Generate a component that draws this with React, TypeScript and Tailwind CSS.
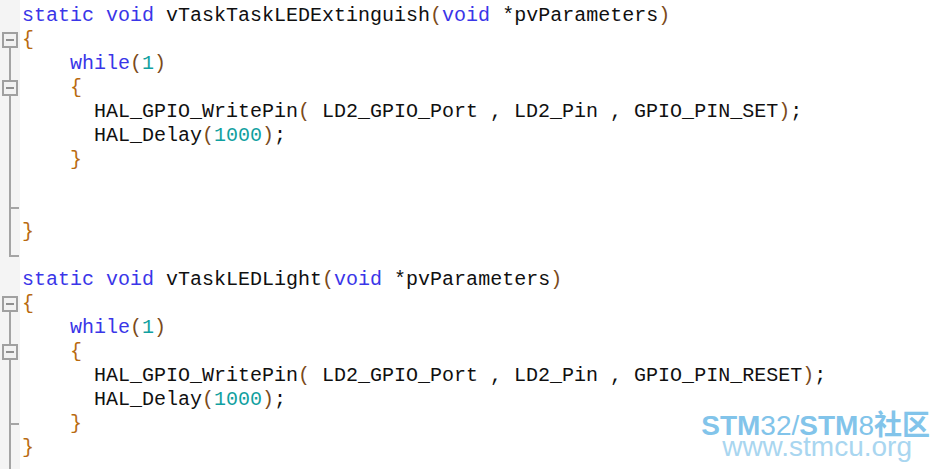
import React from "react";

type Tok = [string, string];
const KW = "text-[#3a36e8]";
const NUM = "text-[#10a0a0]";
const BR = "text-[#b86a10]";
const PA = "text-[#7a4a1a]";
const TX = "text-[#101010]";

type Gut = "none" | "boxTop" | "boxMid" | "line" | "tick" | "end";

const lines: { g: Gut; t: Tok[] }[] = [
  { g: "none", t: [["static", KW], [" ", TX], ["void", KW], [" vTaskTaskLEDExtinguish", TX], ["(", PA], ["void", KW], [" *pvParameters", TX], [")", PA]] },
  { g: "boxTop", t: [["{", BR]] },
  { g: "line", t: [["    ", TX], ["while", KW], ["(", PA], ["1", NUM], [")", PA]] },
  { g: "boxMid", t: [["    ", TX], ["{", BR]] },
  { g: "line", t: [["      HAL_GPIO_WritePin", TX], ["(", PA], [" LD2_GPIO_Port , LD2_Pin , GPIO_PIN_SET", TX], [")", PA], [";", TX]] },
  { g: "line", t: [["      HAL_Delay", TX], ["(", PA], ["1000", NUM], [")", PA], [";", TX]] },
  { g: "line", t: [["    ", TX], ["}", BR]] },
  { g: "line", t: [] },
  { g: "tick", t: [] },
  { g: "line", t: [["}", BR]] },
  { g: "end", t: [] },
  { g: "none", t: [["static", KW], [" ", TX], ["void", KW], [" vTaskLEDLight", TX], ["(", PA], ["void", KW], [" *pvParameters", TX], [")", PA]] },
  { g: "boxTop", t: [["{", BR]] },
  { g: "line", t: [["    ", TX], ["while", KW], ["(", PA], ["1", NUM], [")", PA]] },
  { g: "boxMid", t: [["    ", TX], ["{", BR]] },
  { g: "line", t: [["      HAL_GPIO_WritePin", TX], ["(", PA], [" LD2_GPIO_Port , LD2_Pin , GPIO_PIN_RESET", TX], [")", PA], [";", TX]] },
  { g: "line", t: [["      HAL_Delay", TX], ["(", PA], ["1000", NUM], [")", PA], [";", TX]] },
  { g: "tick", t: [["    ", TX], ["}", BR]] },
  { g: "line", t: [["}", BR]] },
  { g: "line", t: [] },
];

const LC = "#a4a4a4";

function Gutter({ g }: { g: Gut }) {
  return (
    <svg width="20" height="24" viewBox="0 0 20 24" className="block shrink-0">
      {g === "line" && <rect x="9" y="0" width="2" height="24" fill={LC} />}
      {g === "tick" && (
        <>
          <rect x="9" y="0" width="2" height="24" fill={LC} />
          <rect x="10" y="11" width="9" height="2" fill={LC} />
        </>
      )}
      {g === "end" && (
        <>
          <rect x="9" y="0" width="2" height="13" fill={LC} />
          <rect x="10" y="11" width="9" height="2" fill={LC} />
        </>
      )}
      {(g === "boxTop" || g === "boxMid") && (
        <>
          {g === "boxMid" && <rect x="9" y="0" width="2" height="5" fill={LC} />}
          <rect x="9" y="19" width="2" height="5" fill={LC} />
          <rect x="3" y="5" width="14" height="14" fill="#f2f2f2" stroke="#a0a0a0" strokeWidth="2" />
          <rect x="6" y="11" width="8" height="2" fill="#909090" />
        </>
      )}
    </svg>
  );
}

export default function App() {
  return (
    <div className="relative w-[936px] h-[469px] overflow-hidden bg-white">
      <div className="flex h-full">
        <div className="w-5 shrink-0 bg-[#f4f4f4] flex flex-col pt-1">
          {lines.map((l, i) => (
            <Gutter key={i} g={l.g} />
          ))}
        </div>
        <div
          className="flex flex-col pt-1 pl-[2px] text-[20px] leading-[24px] whitespace-pre"
          style={{ fontFamily: '"Liberation Mono", "Courier New", monospace' }}
        >
          {lines.map((l, i) => (
            <div key={i} className="h-6 shrink-0">
              {l.t.map(([s, c], j) => (
                <span key={j} className={c}>
                  {s}
                </span>
              ))}
            </div>
          ))}
        </div>
      </div>
      <div
        className="absolute right-[6px] top-[409px] flex flex-col items-end leading-none"
        style={{ fontFamily: '"Liberation Sans", Arial, "Noto Sans CJK SC", sans-serif' }}
      >
        <div className="text-[28px] text-[#82c4ea]">
          <span className="font-bold">STM</span>
          <span>32/</span>
          <span className="font-bold">STM</span>
          <span>8</span>
          <span className="font-bold" style={{ fontFamily: '"Noto Sans CJK SC", sans-serif' }}>社区</span>
        </div>
        <div className="text-[28px] text-[#a9d6f0] mr-[18px] -mt-[7px]">www.stmcu.org</div>
      </div>
    </div>
  );
}
